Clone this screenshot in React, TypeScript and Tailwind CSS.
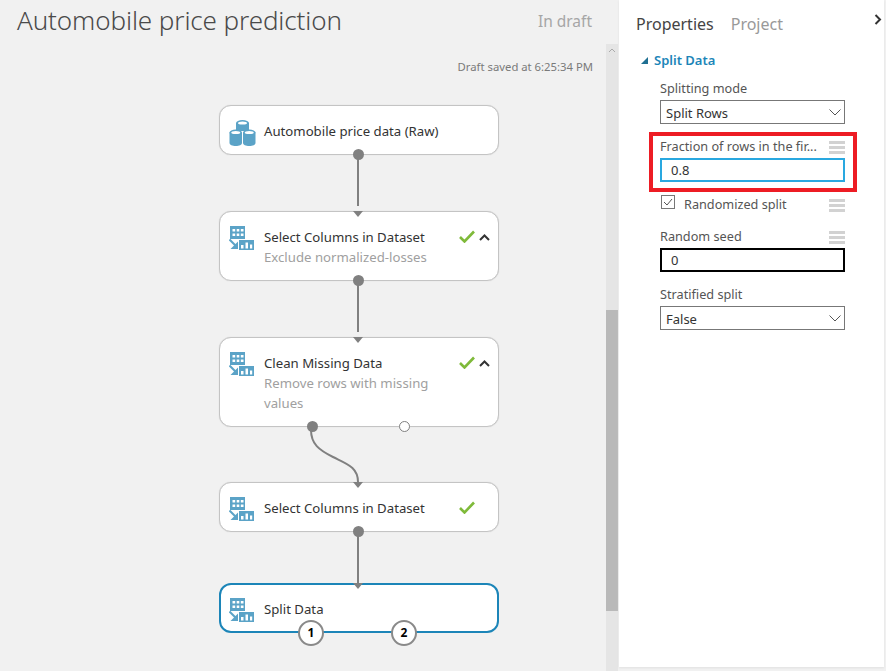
import React from "react";

function TableIcon() {
  return (
    <svg width="25" height="24" viewBox="0 0 25 24" className="block">
      <path fill="#5ba3c7" fillRule="evenodd" d="M1 0h15v13H1z M3.5 3v2.5h2.7V3z M7.7 3v2.5h2.6V3z M11.8 3v2.5h2.7V3z M3.5 7.5V10h2.7V7.5z M7.7 7.5V10h2.6V7.5z M11.8 7.5V10h2.7V7.5z" />
      <path d="M0.5 13.5l7 7" stroke="#5ba3c7" strokeWidth="2" fill="none" />
      <path fill="#5ba3c7" d="M9 15.5V23H1.5z" />
      <path fill="#5ba3c7" fillRule="evenodd" d="M10 14h15v10H10z M12 19v3.5h2.5V19z M16.5 16.5v6H19v-6z M21 18.5v4h2.2v-4z" />
    </svg>
  );
}

function DataIcon() {
  return (
    <svg width="27" height="26" viewBox="0 0 27 26" className="block">
      <ellipse cx="13.5" cy="3" rx="6.5" ry="3" fill="#5ba3c7" />
      <rect x="7" y="3" width="13" height="8" fill="#5ba3c7" />
      <ellipse cx="13.5" cy="3" rx="4.5" ry="1.6" fill="#ffffff" />
      <path d="M0.5 12.5h12.5v10.5c0 1.7-2.8 3-6.25 3S0.5 24.7 0.5 23z" fill="#5ba3c7" />
      <ellipse cx="6.75" cy="12.5" rx="6.25" ry="3" fill="#5ba3c7" />
      <ellipse cx="6.75" cy="12.5" rx="4.5" ry="1.6" fill="#ffffff" />
      <path d="M14 12.5h12.5v10.5c0 1.7-2.8 3-6.25 3S14 24.7 14 23z" fill="#5ba3c7" />
      <ellipse cx="20.25" cy="12.5" rx="6.25" ry="3" fill="#5ba3c7" />
      <ellipse cx="20.25" cy="12.5" rx="4.5" ry="1.6" fill="#ffffff" />
    </svg>
  );
}

function Check() {
  return (
    <svg width="16" height="13" viewBox="0 0 16 13" className="block">
      <path d="M1 7l4.5 4.5L15 1.5" stroke="#7fba3a" strokeWidth="2.6" fill="none" />
    </svg>
  );
}

function Caret() {
  return (
    <svg width="11" height="7" viewBox="0 0 11 7" className="block">
      <path d="M1 6l4.5-4.5L10 6" stroke="#333333" strokeWidth="2" fill="none" />
    </svg>
  );
}

function Straight({ height }: { height: string }) {
  return (
    <div className={`relative z-10 w-[280px] ${height}`}>
      <svg width="280" height="60" viewBox="0 0 280 60" className="block overflow-visible">
        <path d="M139 4V51" stroke="#808080" strokeWidth="2" fill="none" />
      </svg>
    </div>
  );
}

function Arrow({ selected }: { selected?: boolean }) {
  return (
    <svg
      width="10"
      height="6"
      viewBox="0 0 10 6"
      className={`absolute z-20 block ${selected ? "left-[132px] top-[-2px]" : "left-[133px] top-[-1px]"}`}
    >
      <path d="M0 0h10L5 6z" fill="#808080" />
    </svg>
  );
}

function Curved() {
  return (
    <div className="relative z-10 h-[55px] w-[280px]">
      <svg width="280" height="55" viewBox="0 0 280 55" className="block overflow-visible">
        <path d="M92 3c0 14 8 20 22 27s25 10 25 25" stroke="#808080" strokeWidth="2" fill="none" />
      </svg>
    </div>
  );
}

function Port({ left }: { left: string }) {
  return <div className={`absolute bottom-[-6px] h-[11px] w-[11px] rounded-full bg-[#808080] ${left}`} />;
}

function Node({
  title,
  sub,
  icon,
  height,
  check,
  caret,
  arrow,
  children,
  selected,
}: {
  title: string;
  sub?: string;
  icon: React.ReactNode;
  height: string;
  check?: boolean;
  caret?: boolean;
  arrow?: boolean;
  children?: React.ReactNode;
  selected?: boolean;
}) {
  return (
    <div
      className={`relative flex w-[280px] rounded-[12px] bg-white ${height} ${
        selected
          ? "border-2 border-[#1c85b8] pl-[8px] pt-[4px]"
          : "border border-[#c4c4c4] pl-[9px] pt-[5px] shadow-[0_0_1px_#c8c8c8]"
      }`}
    >
      {arrow && <Arrow selected={selected} />}
      <div className="w-[35px] shrink-0 pt-[9px]">{icon}</div>
      <div className="w-[192px] text-[13.2px] leading-[20px]">
        <div className="whitespace-nowrap pt-[10px] text-[#333333]">{title}</div>
        {sub && <div className="text-[#a0a0a0]">{sub}</div>}
      </div>
      {check && (
        <div className="absolute left-[239px] top-[18px]">
          <Check />
        </div>
      )}
      {caret && (
        <div className="absolute left-[259px] top-[22px]">
          <Caret />
        </div>
      )}
      {children}
    </div>
  );
}

function Badge({ n, left }: { n: string; left: string }) {
  return (
    <div
      className={`absolute bottom-[-15px] flex h-[26px] w-[26px] items-center justify-center rounded-full border-2 border-[#8a8a8a] bg-white text-[12px] font-bold text-black ${left}`}
    >
      {n}
    </div>
  );
}

function Lines() {
  return (
    <div className="mt-[2px] flex w-[16px] shrink-0 flex-col gap-[2px]">
      <div className="h-[3px] bg-[#d2d2d2]" />
      <div className="h-[3px] bg-[#d2d2d2]" />
      <div className="h-[3px] bg-[#d2d2d2]" />
    </div>
  );
}

function Select({ value }: { value: string }) {
  return (
    <div className="flex h-[24px] w-[185px] items-center justify-between border border-[#777777] pl-[5px] pr-[3px] pt-[1px] text-[13px] text-[#333333]">
      <span>{value}</span>
      <svg width="12" height="7" viewBox="0 0 12 7" className="block">
        <path d="M0.5 0.5l5.5 5.5 5.5-5.5" stroke="#555555" strokeWidth="1" fill="none" />
      </svg>
    </div>
  );
}

export default function App() {
  return (
    <div
      className="flex h-[671px] w-[886px] overflow-hidden bg-[#f1f1f1]"
      style={{ fontFamily: '"Noto Sans", sans-serif' }}
    >
      <div className="flex w-[606px] shrink-0 flex-col">
        <div className="flex h-[44px] items-start justify-between pl-[17px] pr-[14px]">
          <div className="mt-[2px] text-[26px] font-light leading-[36px] tracking-[-0.1px] text-[#4a4a4a]">Automobile price prediction</div>
          <div className="mt-[11px] text-[15.5px] leading-[20px] text-[#a6a6a6]">In draft</div>
        </div>
        <div className="mt-[15px] pr-[13px] text-right text-[11.3px] leading-[16px] text-[#7a7a7a]">Draft saved at 6:25:34 PM</div>
        <div className="ml-[219px] mt-[30px] flex w-[280px] flex-col">
          <Node title="Automobile price data (Raw)" icon={<DataIcon />} height="h-[50px]">
            <Port left="left-[133px]" />
          </Node>
          <Straight height="h-[56px]" />
          <Node title="Select Columns in Dataset" sub="Exclude normalized-losses" icon={<TableIcon />} height="h-[70px]" check caret arrow>
            <Port left="left-[133px]" />
          </Node>
          <Straight height="h-[56px]" />
          <Node title="Clean Missing Data" sub="Remove rows with missing values" icon={<TableIcon />} height="h-[90px]" check caret arrow>
            <Port left="left-[87px]" />
            <div className="absolute bottom-[-6px] left-[179px] h-[11px] w-[11px] rounded-full border border-[#808080] bg-white" />
          </Node>
          <Curved />
          <Node title="Select Columns in Dataset" icon={<TableIcon />} height="h-[50px]" check arrow>
            <Port left="left-[133px]" />
          </Node>
          <Straight height="h-[51px]" />
          <Node title="Split Data" icon={<TableIcon />} height="h-[50px]" selected arrow>
            <Badge n="1" left="left-[77px]" />
            <Badge n="2" left="left-[170px]" />
          </Node>
        </div>
      </div>

      <div className="flex w-[13px] shrink-0 flex-col pt-[44px]">
        <div className="flex h-[266px] w-[12px] justify-center bg-[#e5e5e5] pt-[4px]">
          <svg width="8" height="5" viewBox="0 0 8 5" className="block">
            <path d="M1 4l3-3 3 3" stroke="#aaaaaa" strokeWidth="1" fill="none" />
          </svg>
        </div>
        <div className="h-[301px] w-[12px] bg-[#b9b9b9]" />
        <div className="w-[12px] flex-1 bg-[#e5e5e5]" />
      </div>

      <div className="relative h-[667px] w-[265px] shrink-0 bg-white shadow-[0_1px_2px_#e0e0e0]">
        <div className="flex gap-[17px] pl-[17px] pt-[12px] text-[16px] leading-[24px]">
          <span className="text-[#444444]">Properties</span>
          <span className="text-[#999999]">Project</span>
        </div>
        <svg width="8" height="11" viewBox="0 0 8 11" className="absolute left-[255px] top-[14px]">
          <path d="M1.5 1l4.5 4.5-4.5 4.5" stroke="#333333" strokeWidth="2" fill="none" />
        </svg>
        <div className="mt-[14px] flex items-center pl-[22px]">
          <svg width="7" height="7" viewBox="0 0 7 7" className="mr-[6px] block">
            <path d="M7 0v7H0z" fill="#1f6f92" />
          </svg>
          <span className="text-[13px] font-semibold leading-[20px] text-[#1c85b8]">Split Data</span>
        </div>
        <div className="ml-[41px] mt-[9px] w-[185px] text-[12.7px] leading-[18px] text-[#555555]">
          <div>Splitting mode</div>
          <div className="mt-[3px]">
            <Select value="Split Rows" />
          </div>
          <div className="-mx-[11px] mt-[8px] h-[60px] w-[208px] border-4 border-[#ed1c24] pl-[7px] pr-[8px]">
            <div className="flex h-[20px] items-center justify-between">
              <span className="whitespace-nowrap">Fraction of rows in the fir...</span>
              <Lines />
            </div>
            <div className="mt-[2px] flex h-[24px] w-[185px] items-center border-2 border-[#29a8e0] pl-[9px] text-[13px] text-[#333333]">0.8</div>
          </div>
          <div className="mt-[3px] flex h-[18px] items-center">
            <div className="-mt-[4px] ml-[1px] flex h-[14px] w-[14px] shrink-0 items-center justify-center border border-[#777777]">
              <svg width="10" height="8" viewBox="0 0 10 8" className="block">
                <path d="M1 4l3 3 5-6" stroke="#555555" strokeWidth="1" fill="none" />
              </svg>
            </div>
            <span className="ml-[9px] flex-1">Randomized split</span>
            <Lines />
          </div>
          <div className="mt-[14px] flex h-[18px] items-center justify-between">
            <span>Random seed</span>
            <Lines />
          </div>
          <div className="mt-[3px] flex h-[24px] w-[185px] items-center border-2 border-black pl-[9px] text-[13px] text-[#333333]">0</div>
          <div className="mt-[13px]">Stratified split</div>
          <div className="mt-[3px]">
            <Select value="False" />
          </div>
        </div>
      </div>
    </div>
  );
}
